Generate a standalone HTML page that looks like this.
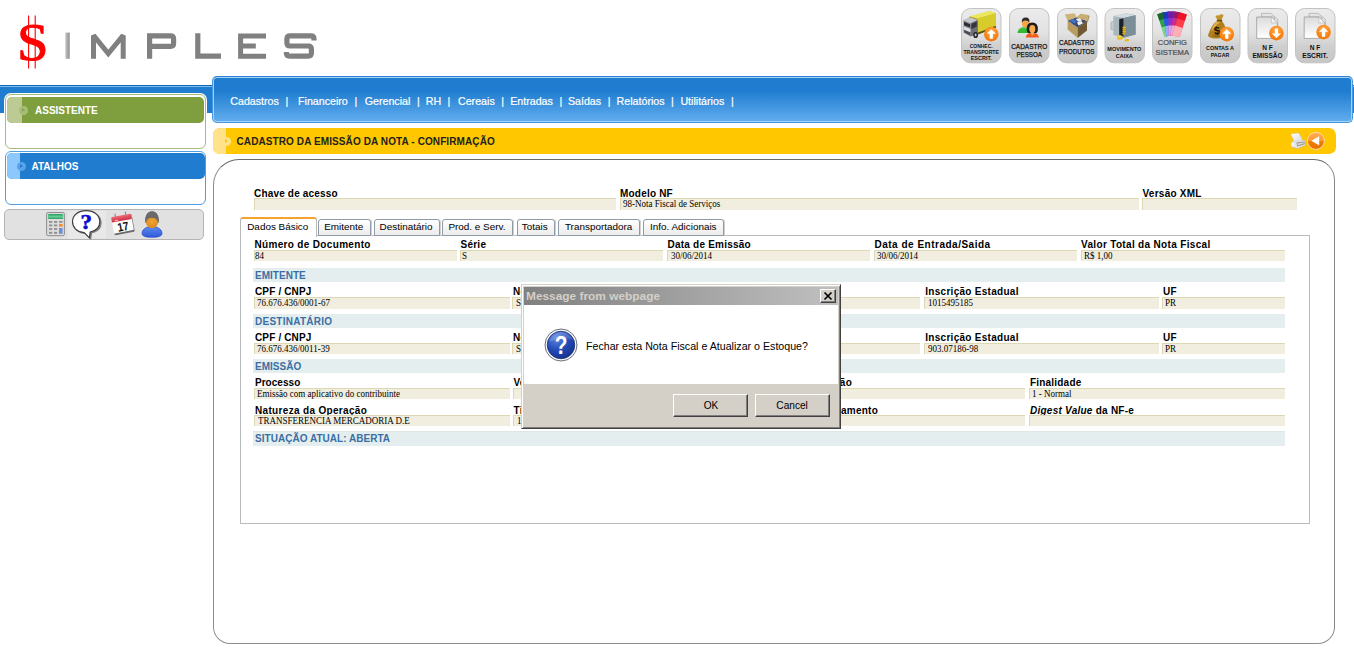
<!DOCTYPE html>
<html>
<head>
<meta charset="utf-8">
<title>Simples</title>
<style>
*{box-sizing:border-box;margin:0;padding:0}
html,body{width:1354px;height:648px;overflow:hidden;background:#fff;font-family:"Liberation Sans",sans-serif;}
.abs{position:absolute}
/* top blue band */
#band{left:0;top:85px;width:1354px;height:28px;background:#1F7CCF;border-top:1px solid #1565b5;box-shadow:inset 0 1px 0 #7fbdf2}
#menubar{left:212px;top:76px;width:1140.5px;height:47px;border:1px solid #4697e2;border-top-color:#2c83d5;border-radius:5px;background:linear-gradient(#1f7ccf 0%,#1f7ccf 30%,#62aeef 100%);box-shadow:inset 0 0 0 1px #a3d1f8}
#menubar span{position:absolute;top:18px;color:#fff;font-size:10.67px;line-height:12px;white-space:pre;-webkit-text-stroke:.2px #fff}
/* sidebar */
.sbox{left:5px;width:201px;border-radius:6px;background:#fff}
.shead{position:absolute;left:1px;top:1px;height:27px;border-radius:5px;overflow:hidden}
.shead i{position:absolute;left:0;top:0;width:14px;height:27px}
.shead em{position:absolute;top:10px;width:9px;height:9px;border-radius:50%}
.shead u{position:absolute;top:12px;width:0;height:0;border:2.5px solid transparent;border-left-width:3px;border-right:none}
.shead b{position:absolute;top:9px;color:#fff;font-size:10px;line-height:12px;font-weight:bold}
/* title bar */
#title{left:213px;top:128px;width:1123px;height:26px;background:#ffc700;border-radius:7px;overflow:hidden}
#title i{position:absolute;left:0;top:0;width:13px;height:26px;background:#ffe28a}
#title em{position:absolute;left:9px;top:9px;width:9px;height:9px;border-radius:50%;background:#ffe28a}
#title u{position:absolute;left:12px;top:11px;width:0;height:0;border:2.5px solid transparent;border-left:3px solid #ffc700;border-right:none}
#title b{position:absolute;left:23.5px;top:8px;font-size:10px;line-height:12px;color:#222;letter-spacing:.1px;white-space:pre}
#main{left:213px;top:159px;width:1122px;height:485px;border:1.3px solid #8c8c8c;border-top:1.6px solid #6a6a6a;border-right:1.6px solid #858585;border-radius:26px 21px 17px 17px;background:#fff}
.lbl{position:absolute;font-weight:bold;font-size:10px;line-height:12px;color:#000;white-space:pre;letter-spacing:.25px}
.fld{position:absolute;height:11px;background:#f1eedf;border-top:1px solid #dcd8b4;border-left:1px solid #dcd8b4;font-family:"Liberation Serif",serif;font-size:10px;line-height:10px;color:#000;white-space:pre;overflow:hidden}
.fld span{position:absolute;left:0;top:0;transform:scaleX(.9);transform-origin:0 0}
.sec{position:absolute;left:253px;width:1032px;height:14px;background:#e5eeee;color:#3a6ea5;font-weight:bold;font-size:10px;line-height:16px;padding-left:2px;white-space:pre;letter-spacing:.03px;overflow:hidden}
.tab{position:absolute;top:219px;height:17px;border:1px solid #8e9aa6;border-radius:3px 3px 0 0;background:linear-gradient(#fff,#ececec);font-size:9px;line-height:15px;color:#000;text-align:center;white-space:pre;box-shadow:1px 0 0 #d0d0d0;padding-right:1px}
.tab span{display:inline-block;transform:scaleX(1.1)}
.tab.act{top:217px;height:20px;border:1px solid #b8b8b8;border-top:2px solid #f5a32f;border-bottom:none;background:#fff;line-height:17px;box-shadow:none}

#dlg{left:521px;top:284px;width:320px;height:145px;background:#d4d0c8;border:1px solid;border-color:#d4d0c8 #404040 #404040 #d4d0c8;box-shadow:inset 1px 1px 0 #fff,inset -1px -1px 0 #808080;font-size:11px;color:#000}
#dlg .tb{position:absolute;left:2px;top:2px;width:314px;height:18px;background:linear-gradient(90deg,#808080,#c0c0c0)}
#dlg .tb b{position:absolute;left:2px;top:3px;line-height:13px;font-size:11px;color:#d4d0c8;white-space:pre;transform:scaleX(1.08);transform-origin:0 0}
#dlg .x{position:absolute;left:296px;top:2px;width:16px;height:14px;background:#d4d0c8;border:1px solid;border-color:#fff #404040 #404040 #fff;box-shadow:inset -1px -1px 0 #808080}
#dlg .body{position:absolute;left:2px;top:20px;width:314px;height:79px;background:#fff}
#dlg .msg{position:absolute;left:62px;top:35px;line-height:13px;white-space:pre;transform:scaleX(.968);transform-origin:0 0}
#dlg .btn{position:absolute;top:109px;width:75px;height:23px;background:#d4d0c8;border:1px solid;border-color:#fff #404040 #404040 #fff;box-shadow:inset -1px -1px 0 #808080;text-align:center;line-height:20px}
#dlg .btn span{display:inline-block;transform:scaleX(.92)}
</style>
</head>
<body>

<!--LOGO-->
<svg class="abs" style="left:0;top:0" width="340" height="80" viewBox="0 0 340 80">
<defs><linearGradient id="ig" x1="0" x2="1"><stop offset="0" stop-color="#c8c8c8"/><stop offset="1" stop-color="#8c8c8c"/></linearGradient></defs>
<text x="0" y="0" font-family="Liberation Serif" font-size="53" fill="#ff0000" stroke="#ff0000" stroke-width="1" transform="translate(17 59.6) scale(1.07 1)">S</text>
<path d="M28.6 15.5v53M35.2 15.5v53" stroke="#ff0000" stroke-width="1.1" fill="none"/>
<rect x="65.3" y="32.6" width="4.4" height="26.2" fill="url(#ig)"/>
<g fill="none" stroke="#808080" stroke-width="5.2" stroke-linejoin="miter">
<path d="M93.5 58.8V35.4L108.3 53.5L123.2 35.4V58.8" stroke-width="5" stroke-miterlimit="2"/>
<path d="M149.6 58.8V35.9H170.5Q173.6 35.9 173.6 39V43.2Q173.6 46.3 170.5 46.3H149.6"/>
<path d="M197.8 33.3V56.2H221"/>
<path d="M266 35.9H240.6V56.2H266M240.6 46H255.8" stroke-width="5"/>
<path d="M314 40.5V39Q314 35.9 310.9 35.9H290Q286.9 35.9 286.9 39V43Q286.9 46 290 46H308.3Q311.4 46 311.4 49.1V53.1Q311.4 56.2 308.3 56.2H289.5Q286.4 56.2 286.4 53.1V52"/>
</g>
</svg>
<!--/LOGO-->
<!--TB-->
<svg class="abs" style="left:955px;top:0" width="390" height="70" viewBox="955 0 390 70" font-family="Liberation Sans" text-anchor="middle">
<defs>
<linearGradient id="bg" x1="0" y1="0" x2="0" y2="1"><stop offset="0" stop-color="#ebebeb"/><stop offset=".45" stop-color="#e2e2e2"/><stop offset=".7" stop-color="#cfcfcf"/><stop offset="1" stop-color="#c6c6c6"/></linearGradient>
<radialGradient id="og" cx="50%" cy="35%" r="65%"><stop offset="0" stop-color="#ffb45a"/><stop offset=".6" stop-color="#f98a1c"/><stop offset="1" stop-color="#f0760a"/></radialGradient>
<linearGradient id="pg" x1="0" y1="0" x2="0" y2="1"><stop offset="0" stop-color="#dcdcdc"/><stop offset="1" stop-color="#ffffff"/></linearGradient>
<linearGradient id="yg" x1="0" y1="0" x2="1" y2="1"><stop offset="0" stop-color="#e8e04a"/><stop offset="1" stop-color="#c4b416"/></linearGradient>
<linearGradient id="sg" x1="0" y1="0" x2="1" y2="0"><stop offset="0" stop-color="#b9c6cc"/><stop offset=".5" stop-color="#8fa0a8"/><stop offset="1" stop-color="#6f828c"/></linearGradient>
<g id="btn"><rect x=".5" y=".5" width="39.5" height="54.3" rx="9" ry="9" fill="url(#bg)" stroke="#c2c2c2" stroke-width="1"/></g>
<g id="up"><circle r="7.3" fill="url(#og)"/><path d="M0-4.8L4.6-.4H1.6V4.6H-1.6V-.4H-4.6Z" fill="#fff"/></g>
<g id="dn"><circle r="7.3" fill="url(#og)"/><path d="M0 4.8L4.6 .4H1.6V-4.6H-1.6V.4H-4.6Z" fill="#fff"/></g>
<g id="doc"><path d="M5.3 0H14.5L21.5 6V21H18V3.6H5.3Z" fill="#e4e4e4" stroke="#a9a9a9" stroke-width=".7"/><path d="M.4 3.6H15L21 9.5V25H.4Z" fill="url(#pg)" stroke="#9c9c9c" stroke-width=".8"/><path d="M15 3.6V9.5H21Z" fill="#f4f4f4" stroke="#b0b0b0" stroke-width=".6"/></g>
</defs>
<!-- 1 truck -->
<g transform="translate(961 8)"><use href="#btn"/>
<path d="M8.4 8.4L28.4 3L35 5.2V19.4L17 26L8.4 21Z" fill="url(#yg)"/><path d="M8.4 8.4L28.4 3L35 5.2L16 10.6Z" fill="#ece660"/><path d="M16 10.6V26L8.4 21V8.4Z" fill="#a99b18"/><path d="M16 10.6L35 5.2V19.4L17 26Z" fill="#d6cc2c"/><path d="M17 24.4L35 18V19.8L17 26.4Z" fill="#55501a"/>
<path d="M2.4 12.2L9.4 9.4L16.8 12V25L9.6 28.6L2.4 24.4Z" fill="#8f9098"/><path d="M2.4 12.2L9.4 9.4L16.8 12L9.6 15.2Z" fill="#c4c5cd"/><path d="M9.6 15.2L16.8 12V25L9.6 28.6Z" fill="#6e6f78"/>
<path d="M3 13.8L9 16.2V19.6L3 17.2Z" fill="#2c2d33"/><path d="M2.8 18.4L9.4 21V24.2L2.8 21.4Z" fill="#e1e1e4"/><path d="M3.2 22L9.2 24.6V27.4L3.2 24.4Z" fill="#4b4c52"/><path d="M10.4 16L15.8 13.6V18.6L10.4 21Z" fill="#34353d"/>
<ellipse cx="14.6" cy="27" rx="2.4" ry="3.1" fill="#1f1f1f"/><ellipse cx="14.6" cy="27" rx="1" ry="1.4" fill="#c8c8c8"/><ellipse cx="29.6" cy="21.6" rx="1.4" ry="2" fill="#2a2a2a"/><ellipse cx="32.6" cy="20.4" rx="1.2" ry="1.8" fill="#2a2a2a"/>
<use href="#up" x="30.3" y="26.1"/>
<g font-weight="bold" font-size="5.6" fill="#111"><text x="20.2" y="39.6" textLength="23" lengthAdjust="spacingAndGlyphs">CONHEC.</text><text x="20.2" y="46" textLength="35.5" lengthAdjust="spacingAndGlyphs">TRANSPORTE</text><text x="20.2" y="52.4" textLength="21" lengthAdjust="spacingAndGlyphs">ESCRIT.</text></g></g>
<!-- 2 people -->
<g transform="translate(1009 8)"><use href="#btn"/>
<path d="M8.6 25Q8.8 19.6 14 19.2H17Q19.4 19.4 19.6 25Z" fill="#3ec63a"/><path d="M8.6 25Q8.8 21.6 14 21.2H19.6V25Z" fill="#2fae2c" opacity=".6"/>
<ellipse cx="16.6" cy="15.4" rx="3.6" ry="4.2" fill="#f4a545"/><path d="M12.8 14.6Q12.4 9.6 16.8 9.6Q21 9.8 20.4 14.4Q18.6 12 16 12.6Q14 12.6 12.8 14.6Z" fill="#2b2b2b"/>
<path d="M16.8 29.6Q17 25.6 21.4 25.2H25.4Q29.6 25.6 29.8 29.6Z" fill="#f4581c"/>
<path d="M17.8 22.4Q17 14.6 23.2 14.6Q29.6 14.6 28.8 22.4Q28.6 24.6 27 25.2H19.6Q18 24.6 17.8 22.4Z" fill="#1e1e1e"/>
<ellipse cx="23.3" cy="21" rx="3" ry="3.9" fill="#f6ab4d"/><path d="M21.8 24H24.8V26.4L23.3 27.4L21.8 26.4Z" fill="#f6ab4d"/>
<g font-size="7" fill="#111" stroke="#111" stroke-width=".25"><text x="20.2" y="40.9" textLength="36" lengthAdjust="spacingAndGlyphs">CADASTRO</text><text x="20.2" y="49.4" textLength="25.5" lengthAdjust="spacingAndGlyphs">PESSOA</text></g></g>
<!-- 3 box -->
<g transform="translate(1057 8)"><use href="#btn"/>
<path d="M10.6 12.6L20.6 19.4V30L10.6 21.6Z" fill="#b89d63"/><path d="M20.6 19.4L30 13V22.6L20.6 30Z" fill="#6f5a33"/>
<path d="M10.6 12.6L19.6 9.2L30 13L20.6 19.4Z" fill="#3f4a63"/><path d="M12.4 12.8L16 10.8L20 13.4L17 15.6Z" fill="#3f73c6"/><path d="M18.6 11L23 10L25 12.4L21.6 14Z" fill="#e9ecf2"/><path d="M20 14.6L24.4 13L26 15.2L21.6 17.4Z" fill="#f4f4f4"/><path d="M15 14.4L18.6 15.6L19.6 18L16 16.2Z" fill="#2b58a8"/>
<path d="M10.6 12.6L7.8 6.6L17.6 5.2L19.6 9.2Z" fill="#cdb47a"/><path d="M30 13L31.6 7L23.6 5.8L19.6 9.2Z" fill="#c8ad70"/><path d="M30 13L31.6 7L32.6 8L30.6 15Z" fill="#a88f58"/>
<g font-size="7" fill="#111" stroke="#111" stroke-width=".25"><text x="19.8" y="37" textLength="35.5" lengthAdjust="spacingAndGlyphs">CADASTRO</text><text x="19.8" y="45.9" textLength="35.5" lengthAdjust="spacingAndGlyphs">PRODUTOS</text></g></g>
<!-- 4 safe -->
<g transform="translate(1104.5 8)"><use href="#btn"/>
<path d="M9 8L21.6 5.4L31 7.2V26.6L19 29.8L9 27Z" fill="url(#sg)"/><path d="M9 8L21.6 5.4L31 7.2L19 10Z" fill="#d3dde1"/><path d="M19 10L31 7.2V26.6L19 29.8Z" fill="#7c8f98"/>
<path d="M14.6 11.2L19 10.2V28.6L14.6 27.4Z" fill="#1b2328"/>
<path d="M6.4 14.2L11.4 12.8V22.4L6.4 21.6Z" fill="#c2ccd1" stroke="#8f9ca3" stroke-width=".5"/><path d="M9 8L14.6 11.2V27.4L9 27Z" fill="#aab7bd"/>
<ellipse cx="19.6" cy="19.6" rx="1.8" ry="1.1" fill="#e3b719"/><ellipse cx="19.6" cy="21.6" rx="1.8" ry="1.1" fill="#d8a90f"/><ellipse cx="19.6" cy="23.6" rx="1.8" ry="1.1" fill="#e3b719"/><ellipse cx="19.4" cy="25.6" rx="1.8" ry="1.1" fill="#d8a90f"/>
<ellipse cx="15.4" cy="30" rx="3" ry="1.7" fill="#e6bb1c"/><ellipse cx="15" cy="28.6" rx="2.6" ry="1.5" fill="#f0cc3a"/><ellipse cx="22.4" cy="32.2" rx="2.4" ry="1.2" fill="#e6bb1c"/>
<g font-weight="bold" font-size="5.8" fill="#111"><text x="19.8" y="43.4" textLength="34" lengthAdjust="spacingAndGlyphs">MOVIMENTO</text><text x="19.8" y="49.6" textLength="17" lengthAdjust="spacingAndGlyphs">CAIXA</text></g></g>
<!-- 5 colors -->
<g transform="translate(1152 8)"><use href="#btn"/>
<clipPath id="fc2"><path d="M0 2H40V27L27 28.8L19.5 27.4L12 28.8L0 26Z"/></clipPath><g clip-path="url(#fc2)"><g transform="translate(19.5 40)">
<g transform="rotate(-18)"><rect x="-3.1" y="-36.5" width="6.2" height="27" fill="#2fa14a"/><rect x="-3.1" y="-36.5" width="6.2" height="6.5" fill="#17692b"/><rect x="-3.1" y="-22.5" width="6.2" height="13" fill="#86dd99" opacity=".85"/></g>
<g transform="rotate(-9)"><rect x="-3.1" y="-36.5" width="6.2" height="27" fill="#2a55ea"/><rect x="-3.1" y="-36.5" width="6.2" height="6.5" fill="#1b39b8"/><rect x="-3.1" y="-22.5" width="6.2" height="13" fill="#a4bcff" opacity=".85"/></g>
<g transform="rotate(0)"><rect x="-3.1" y="-36.5" width="6.2" height="27" fill="#8a33c9"/><rect x="-3.1" y="-36.5" width="6.2" height="6.5" fill="#6a1ea6"/><rect x="-3.1" y="-22.5" width="6.2" height="13" fill="#dcb6f3" opacity=".85"/></g>
<g transform="rotate(8.5)"><rect x="-3.1" y="-36.5" width="6.2" height="27" fill="#c92c8c"/><rect x="-3.1" y="-36.5" width="6.2" height="6.5" fill="#9c1766"/><rect x="-3.1" y="-22.5" width="6.2" height="13" fill="#f6b8dc" opacity=".85"/></g>
<g transform="rotate(17.5)"><rect x="-3.1" y="-36.5" width="7.7" height="27" fill="#ff3b4c"/><rect x="-3.1" y="-36.5" width="7.7" height="6.5" fill="#ee1226"/><rect x="-3.1" y="-22.5" width="7.7" height="13" fill="#ffc6ca" opacity=".85"/></g>
</g></g>
<g font-size="7.6" fill="#4d4d4d" stroke="#4d4d4d" stroke-width=".2"><text x="20.3" y="36.8" textLength="29" lengthAdjust="spacingAndGlyphs">CONFIG</text><text x="20.3" y="47.2" textLength="33.5" lengthAdjust="spacingAndGlyphs">SISTEMA</text></g></g>
<!-- 6 bag -->
<g transform="translate(1200 8)"><use href="#btn"/>
<path d="M17.4 12.6Q11 17 8 27.4Q8.6 30 15 30.4Q23 30.8 26.6 28Q27.6 20 21.6 12.6Z" fill="#b07f1f"/><path d="M17.4 12.6Q13 16 11 24Q15 18 21.6 12.6Z" fill="#dcb04a"/><path d="M12 28Q17 30.6 25 28Q20 27 18 22Q15 27 12 28Z" fill="#8c6212" opacity=".7"/>
<path d="M15.4 8.6Q17 6.4 19 7.6Q21.6 5 23.6 7.4Q21.6 10 21.8 12.8L17.2 12.8Q17 10.4 15.4 8.6Z" fill="#c4932b"/><rect x="16.8" y="11.8" width="5.4" height="1.7" rx=".8" fill="#6b4a0c"/>
<text x="17" y="26.4" font-weight="bold" font-size="11" fill="#1a1408" transform="rotate(-8 17 22)">$</text>
<use href="#up" x="26.8" y="26.1"/>
<g font-weight="bold" font-size="5.8" fill="#111"><text x="20" y="42.4" textLength="28" lengthAdjust="spacingAndGlyphs">CONTAS A</text><text x="20" y="48.8" textLength="18.5" lengthAdjust="spacingAndGlyphs">PAGAR</text></g></g>
<!-- 7 nf emissao -->
<g transform="translate(1247.5 8)"><use href="#btn"/>
<use href="#doc" x="8.8" y="5.4"/><use href="#dn" x="28.9" y="25.1"/>
<g font-weight="bold" font-size="6.6" fill="#111"><text x="20" y="41.8" textLength="10.5" lengthAdjust="spacingAndGlyphs">N F</text><text x="20" y="49.8" textLength="30" lengthAdjust="spacingAndGlyphs">EMISSÃO</text></g></g>
<!-- 8 nf escrit -->
<g transform="translate(1295 8)"><use href="#btn"/>
<use href="#doc" x="8.8" y="5.4"/><use href="#up" x="28.6" y="24.1"/>
<g font-weight="bold" font-size="6.6" fill="#111"><text x="20" y="41.8" textLength="10.5" lengthAdjust="spacingAndGlyphs">N F</text><text x="20" y="49.8" textLength="25.5" lengthAdjust="spacingAndGlyphs">ESCRIT.</text></g></g>
</svg>
<!--/TB-->
<div id="band" class="abs"></div>
<div id="menubar" class="abs"><span style="left:17.3px">Cadastros</span><span style="left:72.6px">|</span><span style="left:85.0px">Financeiro</span><span style="left:141.4px">|</span><span style="left:151.7px">Gerencial</span><span style="left:203.9px">|</span><span style="left:212.7px">RH</span><span style="left:234.5px">|</span><span style="left:245.0px">Cereais</span><span style="left:288.2px">|</span><span style="left:297.2px">Entradas</span><span style="left:346.5px">|</span><span style="left:354.9px">Saídas</span><span style="left:394.8px">|</span><span style="left:403.6px">Relatórios</span><span style="left:458.1px">|</span><span style="left:467.4px">Utilitários</span><span style="left:517.9px">|</span></div>

<div class="abs sbox" style="top:94px;height:55px;border:1px solid #a9b87c;box-shadow:0 0 0 1px #fff"><div class="shead" style="width:197px;top:1.5px;height:26px;background:#7f9f3f"><i style="background:#bccb94;width:15px"></i><em style="background:#a6bd74;left:12px;top:9px"></em><u style="left:15px;top:11px;border-left-color:#8c9f66"></u><b style="left:28px;top:8.5px">ASSISTENTE</b></div></div>
<div class="abs sbox" style="top:151px;height:54px;border:1px solid #4f9de3;box-shadow:0 0 0 1px #fff"><div class="shead" style="width:198px;left:1px;height:26px;background:#1f7ccf"><i style="background:#8cc8fb;width:13px"></i><em style="background:#57a4ea;left:10px;top:9px"></em><u style="left:13px;top:11px;border-left-color:#2a78c8"></u><b style="left:24.5px;top:8px">ATALHOS</b></div></div>
<div class="abs" id="iconbar" style="left:4px;top:209px;width:200px;height:31px;border:1px solid #b4b4b4;border-radius:5px;background:#e1e1e1"></div>
<!--SIDEICO-->
<svg class="abs" style="left:40px;top:206px" width="130" height="36" viewBox="40 206 130 36">
<defs>
<linearGradient id="cg" x1="0" y1="0" x2="0" y2="1"><stop offset="0" stop-color="#2c9a60"/><stop offset=".55" stop-color="#63d199"/><stop offset="1" stop-color="#2c9a60"/></linearGradient>
<linearGradient id="ub" x1="0" y1="0" x2="0" y2="1"><stop offset="0" stop-color="#5f8af4"/><stop offset="1" stop-color="#2f5ad6"/></linearGradient>
<linearGradient id="rd" x1="0" y1="0" x2="0" y2="1"><stop offset="0" stop-color="#ef6b76"/><stop offset="1" stop-color="#cf2f43"/></linearGradient>
<radialGradient id="fc" cx="50%" cy="40%" r="60%"><stop offset="0" stop-color="#f0a534"/><stop offset="1" stop-color="#d98a1c"/></radialGradient>
</defs>
<!-- calculator -->
<rect x="46.6" y="212.5" width="17.8" height="23.2" rx="1.6" fill="#dcdcdc" stroke="#8d8d8d" stroke-width="1"/>
<rect x="48" y="214" width="15.2" height="5" rx="1" fill="url(#cg)"/>
<g fill="#8e8e8e"><rect x="49" y="221" width="3.2" height="1.8"/><rect x="54" y="221" width="3.2" height="1.8"/><rect x="59.1" y="221" width="3.4" height="1.8"/>
<rect x="49" y="224.5" width="3.2" height="1.8"/><rect x="54" y="224.5" width="3.2" height="1.8"/>
<rect x="49" y="228.1" width="3.2" height="1.8"/><rect x="54" y="228.1" width="3.2" height="1.8"/>
<rect x="49" y="231.9" width="3.2" height="1.8"/><rect x="54" y="231.9" width="3.2" height="1.8"/></g>
<rect x="59" y="224.2" width="3.6" height="2.4" fill="#f5861a"/><rect x="59" y="228" width="3.6" height="5.8" fill="#6b8fd3"/>
<!-- help bubble -->
<rect x="68" y="211" width="38" height="27.6" fill="#e8e8e8"/>
<path d="M86.2 210.6C94.2 210.6 99.8 215.4 99.8 221.8C99.8 227.2 95.6 230.8 90.2 232L89.4 237.8L84.2 232.5C76.8 232 72.5 227.4 72.5 221.6C72.5 215.4 78.2 210.6 86.2 210.6Z" fill="#7d7d7d" stroke="#7d7d7d" stroke-width="1.1" transform="translate(1.3 1)"/>
<path d="M86.2 210.6C94.2 210.6 99.8 215.4 99.8 221.8C99.8 227.2 95.6 230.8 90.2 232L89.4 237.8L84.2 232.5C76.8 232 72.5 227.4 72.5 221.6C72.5 215.4 78.2 210.6 86.2 210.6Z" fill="#fff" stroke="#3c3c3c" stroke-width="1.1"/>
<text x="0" y="0" text-anchor="middle" font-family="Liberation Serif" font-weight="bold" font-size="21" fill="#0a0acc" stroke="#0a0acc" stroke-width=".6" transform="translate(86.3 228.7) scale(1.1 1)">?</text>
<!-- calendar -->
<g transform="rotate(-10.5 122 224)">
<rect x="112.8" y="216.2" width="20.4" height="17.6" rx="1" fill="#6b6b6b"/>
<rect x="112.4" y="215.4" width="20.2" height="16.6" rx="1" fill="#fdfdfd"/>
<path d="M112.4 216.4Q112.4 215.4 113.4 215.4H131.6Q132.6 215.4 132.6 216.4V220.8H112.4Z" fill="url(#rd)"/>
<rect x="115.4" y="219" width="3.4" height="1.1" fill="#f7c0c5"/>
<rect x="116.3" y="212.4" width="1.2" height="4.6" rx=".6" fill="#8a8f9a"/><rect x="126.8" y="212.4" width="1.2" height="4.6" rx=".6" fill="#8a8f9a"/>
<text x="122.6" y="231" text-anchor="middle" font-family="Liberation Sans" font-weight="bold" font-size="12" fill="#111" textLength="11.4" lengthAdjust="spacingAndGlyphs">17</text>
</g>
<!-- user -->
<path d="M142 233.4C142 229.4 146 226.6 152 226.6C158 226.6 162 229.4 162 233.4C162 236.4 157.6 237.3 152 237.3C146.4 237.3 142 236.4 142 233.4Z" fill="url(#ub)" stroke="#1d3fc0" stroke-width=".6"/>
<path d="M145.4 223C144.4 215.8 147.6 211.2 152 211.2C156.4 211.2 159.6 215.8 158.6 223Z" fill="#646464"/>
<ellipse cx="152" cy="222.6" rx="5.9" ry="5.6" fill="url(#fc)"/>
<path d="M145.4 221.6C144.8 215.6 148 211.4 152 211.4C156 211.4 159.2 215.6 158.6 221.6C157 218.6 154.8 217.8 152 217.8C149.2 217.8 147 218.6 145.4 221.6Z" fill="#6a6a6a"/>
</svg>
<!--/SIDEICO-->
<div id="title" class="abs"><i></i><em></em><u></u><b>CADASTRO DA EMISSÃO DA NOTA - CONFIRMAÇÃO</b><svg style="position:absolute;left:1067px;top:0" width="56" height="26" viewBox="1280 128 56 26">
<defs><linearGradient id="bk" x1="0" y1="0" x2="0" y2="1"><stop offset="0" stop-color="#ffab55"/><stop offset=".5" stop-color="#ff9a30"/><stop offset=".52" stop-color="#f47c00"/><stop offset="1" stop-color="#e87000"/></linearGradient>
<linearGradient id="pp" x1="0" y1="0" x2="1" y2="1"><stop offset="0" stop-color="#ffffff"/><stop offset="1" stop-color="#d9d9dd"/></linearGradient></defs>
<path d="M1291 142.6L1294.2 140.2L1304.8 140.4L1305.6 145L1297.6 148.6L1291.6 147Z" fill="#e4e4e2" stroke="#b9b9b4" stroke-width=".5"/>
<path d="M1290.8 134L1298.6 133L1303 140.6L1294.4 141.8Z" fill="url(#pp)" stroke="#c9c9cf" stroke-width=".4"/>
<path d="M1296.4 142.6L1304.4 141.4L1304.8 144.2L1297.2 146.6Z" fill="#9a9a94"/><path d="M1297.4 143.4L1303.6 142.4L1303.8 143.6L1297.8 145.2Z" fill="#d9d8d0"/>
<ellipse cx="1292.8" cy="144.6" rx="1.5" ry="2.2" fill="#f4f4f4"/>
<circle cx="1315.9" cy="140.9" r="8.5" fill="url(#bk)" stroke="#ffe2b0" stroke-width=".9"/>
<path d="M1311.3 140.8L1319.2 136.2V145.4Z" fill="#fff"/>
</svg></div>
<div id="main" class="abs"></div>

<!--FORM-->
<div class="abs" id="panel" style="left:240px;top:235px;width:1070px;height:289px;border:1px solid #b9bdc0;background:#fff"></div>
<div class="tab act" style="left:240px;width:77px"><span>Dados Básico</span></div>
<div class="tab" style="left:317.5px;width:53.5px"><span>Emitente</span></div>
<div class="tab" style="left:373.5px;width:66px"><span>Destinatário</span></div>
<div class="tab" style="left:442px;width:71px"><span>Prod. e Serv.</span></div>
<div class="tab" style="left:516.5px;width:38.5px"><span>Totais</span></div>
<div class="tab" style="left:558px;width:82px"><span>Transportadora</span></div>
<div class="tab" style="left:643px;width:81px"><span>Info. Adicionais</span></div>
<div class="lbl" style="left:254px;top:188px;letter-spacing:0.18px;">Chave de acesso</div>
<div class="fld" style="left:254px;top:198px;width:362px;height:12px"></div>
<div class="lbl" style="left:620px;top:188px;letter-spacing:0.2px;">Modelo NF</div>
<div class="fld" style="left:620px;top:198px;width:518.5px;height:12px"><span style="left:2.3px">98-Nota Fiscal de Serviços</span></div>
<div class="lbl" style="left:1142.5px;top:188px;letter-spacing:0.25px;">Versão XML</div>
<div class="fld" style="left:1142px;top:198px;width:155px;height:12px"></div>
<div class="lbl" style="left:254.5px;top:239px;letter-spacing:0.33px;">Número de Documento</div>
<div class="fld" style="left:254px;top:250px;width:203px"><span style="left:0px">84</span></div>
<div class="lbl" style="left:460.5px;top:239px;">Série</div>
<div class="fld" style="left:460px;top:250px;width:203px"><span style="left:0.8px">S</span></div>
<div class="lbl" style="left:667.5px;top:239px;letter-spacing:0.22px;">Data de Emissão</div>
<div class="fld" style="left:667px;top:250px;width:203px"><span style="left:2.5px">30/06/2014</span></div>
<div class="lbl" style="left:874.5px;top:239px;letter-spacing:0.5px;">Data de Entrada/Saida</div>
<div class="fld" style="left:874px;top:250px;width:203px"><span style="left:2px">30/06/2014</span></div>
<div class="lbl" style="left:1081.0px;top:239px;letter-spacing:0.33px;">Valor Total da Nota Fiscal</div>
<div class="fld" style="left:1080.5px;top:250px;width:204px"><span style="left:2.5px">R$ 1,00</span></div>
<div class="sec" style="top:268px">EMITENTE</div>
<div class="lbl" style="left:255px;top:286px;letter-spacing:0.15px;">CPF / CNPJ</div>
<div class="fld" style="left:254px;top:297px;width:255.5px;height:12px"><span style="left:1.7px">76.676.436/0001-67</span></div>
<div class="lbl" style="left:513px;top:286px;">Nome / Razão Social</div>
<div class="fld" style="left:512px;top:297px;width:408px;height:12px"><span style="left:2.5px">S</span></div>
<div class="lbl" style="left:925.3px;top:286px;letter-spacing:0.28px;">Inscrição Estadual</div>
<div class="fld" style="left:924px;top:297px;width:234.5px;height:12px"><span style="left:2.8px">1015495185</span></div>
<div class="lbl" style="left:1163px;top:286px;">UF</div>
<div class="fld" style="left:1162px;top:297px;width:122.5px;height:12px"><span style="left:1.5px">PR</span></div>
<div class="sec" style="top:314px;letter-spacing:.26px">DESTINATÁRIO</div>
<div class="lbl" style="left:255px;top:332px;letter-spacing:0.15px;">CPF / CNPJ</div>
<div class="fld" style="left:254px;top:343px;width:255.5px"><span style="left:1.7px">76.676.436/0011-39</span></div>
<div class="lbl" style="left:513px;top:332px;">Nome / Razão Social</div>
<div class="fld" style="left:512px;top:343px;width:408px"><span style="left:2.5px">S</span></div>
<div class="lbl" style="left:925.3px;top:332px;letter-spacing:0.28px;">Inscrição Estadual</div>
<div class="fld" style="left:924px;top:343px;width:234.5px"><span style="left:2.8px">903.07186-98</span></div>
<div class="lbl" style="left:1163px;top:332px;">UF</div>
<div class="fld" style="left:1162px;top:343px;width:122.5px"><span style="left:1.5px">PR</span></div>
<div class="sec" style="top:359px">EMISSÃO</div>
<div class="lbl" style="left:255px;top:377px;letter-spacing:0.03px;">Processo</div>
<div class="fld" style="left:254px;top:388px;width:255.5px"><span style="left:1.7px">Emissão com aplicativo do contribuinte</span></div>
<div class="lbl" style="left:513.5px;top:377px;">Versão do Processo</div>
<div class="fld" style="left:512.5px;top:388px;width:255px"></div>
<div class="lbl" style="left:771.5px;top:377px;"></div>
<div class="fld" style="left:770.5px;top:388px;width:254.5px"></div>
<div class="lbl" style="left:1030px;top:377px;letter-spacing:0.2px;">Finalidade</div>
<div class="fld" style="left:1029px;top:388px;width:255.5px"><span style="left:1.5px">1 - Normal</span></div>
<div class="lbl" style="left:255px;top:404.5px;letter-spacing:0.33px;">Natureza da Operação</div>
<div class="lbl" style="left:513.5px;top:404.5px;">Tipo da Operação</div>
<div class="lbl" style="left:1030px;top:404.5px;"><i>Digest Value</i> da NF-e</div>
<div class="lbl" style="right:502px;top:377px">Tipo de Emissão</div>
<div class="lbl" style="right:476px;top:404.5px">Forma de Pagamento</div>
<div class="fld" style="left:254px;top:415px;width:255.5px"><span style="left:3px">TRANSFERÊNCIA MERCADORIA D.E</span></div>
<div class="fld" style="left:512.5px;top:415px;width:255px"><span style="left:3px">1</span></div>
<div class="fld" style="left:770.5px;top:415px;width:254.5px"></div>
<div class="fld" style="left:1029px;top:415px;width:255.5px"></div>
<div class="sec" style="top:431px;height:15px;line-height:14px;border-top:1px solid #dfe6e6">SITUAÇÃO ATUAL: ABERTA</div>
<!--/FORM-->

<!--DLG-->
<div id="dlg" class="abs">
<div class="tb"><b>Message from webpage</b><div class="x"><svg width="14" height="12" viewBox="0 0 14 12" style="position:absolute;left:0;top:0"><path d="M3.5 2.5l7 7M10.5 2.5l-7 7" stroke="#000" stroke-width="1.7" fill="none"/></svg></div></div>
<div class="body">
<svg style="position:absolute;left:20px;top:23px" width="34" height="34" viewBox="0 0 34 34">
<defs><radialGradient id="qg" cx="35%" cy="25%" r="85%"><stop offset="0" stop-color="#5b86e0"/><stop offset=".55" stop-color="#2148b4"/><stop offset="1" stop-color="#142f86"/></radialGradient></defs>
<circle cx="17" cy="17" r="16" fill="#fff" stroke="#6a6f7c" stroke-width="1"/>
<circle cx="17" cy="17" r="13.8" fill="url(#qg)" stroke="#1a2f78" stroke-width=".8"/>
<path d="M5 14a12.5 12.5 0 0 1 24 -2c-6 -3 -16 -2 -24 2z" fill="#fff" opacity=".18"/>
<text x="0" y="0" text-anchor="middle" font-family="Liberation Sans" font-weight="bold" font-size="26" fill="#fff" transform="translate(17 26.4) scale(.8 1)">?</text>
</svg>
<div class="msg">Fechar esta Nota Fiscal e Atualizar o Estoque?</div>
</div>
<div class="btn" style="left:151px"><span>OK</span></div>
<div class="btn" style="left:233px"><span>Cancel</span></div>
</div>
<!--/DLG-->
</body>
</html>
